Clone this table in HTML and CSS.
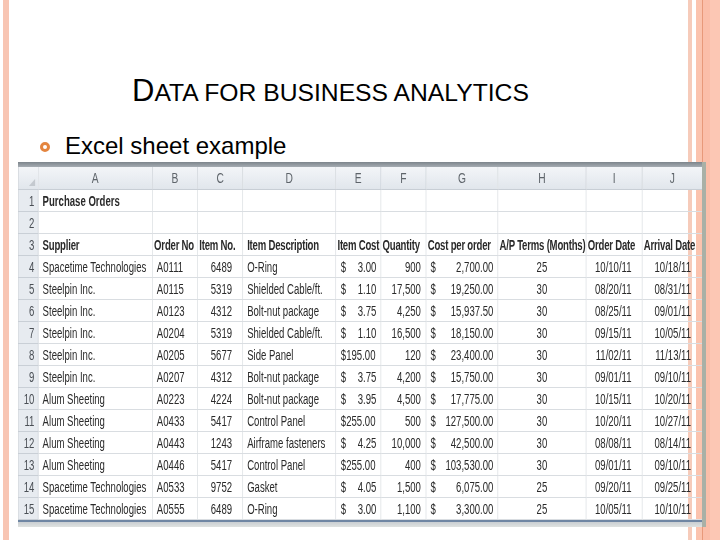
FILE: index.html
```html
<!DOCTYPE html>
<html>
<head>
<meta charset="utf-8">
<link rel="stylesheet" href="styles.css">
</head>
<body>
<div class="slide">
  <h1 class="title"><span class="big">D</span>ATA FOR BUSINESS ANALYTICS</h1>
  <div class="bullet"><span class="dot"></span><span>Excel sheet example</span></div>
  <div class="sheet">
    <div class="topbar"></div>
    <div class="gridwrap">
    <table class="grid">
      <colgroup>
        <col class="c-n"><col class="c-a"><col class="c-b"><col class="c-c"><col class="c-d"><col class="c-e"><col class="c-f"><col class="c-g"><col class="c-h"><col class="c-i"><col class="c-j">
      </colgroup>
      <tr class="colhead">
        <th class="corner"><span class="tri"></span></th><th>A</th><th>B</th><th>C</th><th>D</th><th>E</th><th>F</th><th>G</th><th>H</th><th>I</th><th>J</th>
      </tr>
      <tr><td class="n">1</td><td class="a bold">Purchase Orders</td><td></td><td></td><td></td><td></td><td></td><td></td><td></td><td></td><td></td></tr>
      <tr><td class="n">2</td><td></td><td></td><td></td><td></td><td></td><td></td><td></td><td></td><td></td><td></td></tr>
      <tr class="hdr"><td class="n">3</td><td class="a">Supplier</td><td class="h">Order No</td><td class="h">Item No.</td><td class="a">Item Description</td><td class="h">Item Cost</td><td class="h">Quantity</td><td class="h">Cost per order</td><td class="h">A/P Terms (Months)</td><td class="h">Order Date</td><td class="h">Arrival Date</td></tr>
      <tr><td class="n">4</td><td class="a">Spacetime Technologies</td><td class="b">A0111</td><td class="c">6489</td><td class="a">O-Ring</td><td class="e"><div class="acc"><span>$</span><span>3.00</span></div></td><td class="f">900</td><td class="g"><div class="acc"><span>$</span><span>2,700.00</span></div></td><td class="hc">25</td><td class="i">10/10/11</td><td class="j">10/18/11</td></tr>
      <tr><td class="n">5</td><td class="a">Steelpin Inc.</td><td class="b">A0115</td><td class="c">5319</td><td class="a">Shielded Cable/ft.</td><td class="e"><div class="acc"><span>$</span><span>1.10</span></div></td><td class="f">17,500</td><td class="g"><div class="acc"><span>$</span><span>19,250.00</span></div></td><td class="hc">30</td><td class="i">08/20/11</td><td class="j">08/31/11</td></tr>
      <tr><td class="n">6</td><td class="a">Steelpin Inc.</td><td class="b">A0123</td><td class="c">4312</td><td class="a">Bolt-nut package</td><td class="e"><div class="acc"><span>$</span><span>3.75</span></div></td><td class="f">4,250</td><td class="g"><div class="acc"><span>$</span><span>15,937.50</span></div></td><td class="hc">30</td><td class="i">08/25/11</td><td class="j">09/01/11</td></tr>
      <tr><td class="n">7</td><td class="a">Steelpin Inc.</td><td class="b">A0204</td><td class="c">5319</td><td class="a">Shielded Cable/ft.</td><td class="e"><div class="acc"><span>$</span><span>1.10</span></div></td><td class="f">16,500</td><td class="g"><div class="acc"><span>$</span><span>18,150.00</span></div></td><td class="hc">30</td><td class="i">09/15/11</td><td class="j">10/05/11</td></tr>
      <tr><td class="n">8</td><td class="a">Steelpin Inc.</td><td class="b">A0205</td><td class="c">5677</td><td class="a">Side Panel</td><td class="e"><div class="acc"><span>$195.00</span></div></td><td class="f">120</td><td class="g"><div class="acc"><span>$</span><span>23,400.00</span></div></td><td class="hc">30</td><td class="i">11/02/11</td><td class="j">11/13/11</td></tr>
      <tr><td class="n">9</td><td class="a">Steelpin Inc.</td><td class="b">A0207</td><td class="c">4312</td><td class="a">Bolt-nut package</td><td class="e"><div class="acc"><span>$</span><span>3.75</span></div></td><td class="f">4,200</td><td class="g"><div class="acc"><span>$</span><span>15,750.00</span></div></td><td class="hc">30</td><td class="i">09/01/11</td><td class="j">09/10/11</td></tr>
      <tr><td class="n">10</td><td class="a">Alum Sheeting</td><td class="b">A0223</td><td class="c">4224</td><td class="a">Bolt-nut package</td><td class="e"><div class="acc"><span>$</span><span>3.95</span></div></td><td class="f">4,500</td><td class="g"><div class="acc"><span>$</span><span>17,775.00</span></div></td><td class="hc">30</td><td class="i">10/15/11</td><td class="j">10/20/11</td></tr>
      <tr><td class="n">11</td><td class="a">Alum Sheeting</td><td class="b">A0433</td><td class="c">5417</td><td class="a">Control Panel</td><td class="e"><div class="acc"><span>$255.00</span></div></td><td class="f">500</td><td class="g"><div class="acc"><span>$</span><span>127,500.00</span></div></td><td class="hc">30</td><td class="i">10/20/11</td><td class="j">10/27/11</td></tr>
      <tr><td class="n">12</td><td class="a">Alum Sheeting</td><td class="b">A0443</td><td class="c">1243</td><td class="a">Airframe fasteners</td><td class="e"><div class="acc"><span>$</span><span>4.25</span></div></td><td class="f">10,000</td><td class="g"><div class="acc"><span>$</span><span>42,500.00</span></div></td><td class="hc">30</td><td class="i">08/08/11</td><td class="j">08/14/11</td></tr>
      <tr><td class="n">13</td><td class="a">Alum Sheeting</td><td class="b">A0446</td><td class="c">5417</td><td class="a">Control Panel</td><td class="e"><div class="acc"><span>$255.00</span></div></td><td class="f">400</td><td class="g"><div class="acc"><span>$</span><span>103,530.00</span></div></td><td class="hc">30</td><td class="i">09/01/11</td><td class="j">09/10/11</td></tr>
      <tr><td class="n">14</td><td class="a">Spacetime Technologies</td><td class="b">A0533</td><td class="c">9752</td><td class="a">Gasket</td><td class="e"><div class="acc"><span>$</span><span>4.05</span></div></td><td class="f">1,500</td><td class="g"><div class="acc"><span>$</span><span>6,075.00</span></div></td><td class="hc">25</td><td class="i">09/20/11</td><td class="j">09/25/11</td></tr>
      <tr><td class="n">15</td><td class="a">Spacetime Technologies</td><td class="b">A0555</td><td class="c">6489</td><td class="a">O-Ring</td><td class="e"><div class="acc"><span>$</span><span>3.00</span></div></td><td class="f">1,100</td><td class="g"><div class="acc"><span>$</span><span>3,300.00</span></div></td><td class="hc">25</td><td class="i">10/05/11</td><td class="j">10/10/11</td></tr>
    </table>
    </div>
    <div class="bottombar"></div>
  </div>
</div>
</body>
</html>
```
FILE: styles.css
```css
html, body {
  margin: 0;
  padding: 0;
}
body {
  width: 720px;
  height: 540px;
  overflow: hidden;
  background: #fff;
}
.slide {
  width: 720px;
  height: 540px;
  box-sizing: border-box;
  padding-top: 76px;
  font-family: "Liberation Sans", Arial, sans-serif;
  color: #000;
  background: linear-gradient(to right,
    #fff 0, #fff 3px,
    #f8c5b3 3px, #f8c5b3 9px,
    #fff 9px, #fff 688px,
    #f6cbba 688px, #f6cbba 692px,
    #fff 692px, #fff 696px,
    #fbc3ae 696px, #fbc3ae 702px,
    #e8997a 702px, #e8997a 703px,
    #fbbea9 703px, #fbbea9 710px,
    #fcc7b4 710px, #fcc7b4 720px);
}
.title {
  margin: 0;
  padding-left: 132px;
  font-weight: normal;
  font-size: 24.7px;
  line-height: 32px;
  height: 32px;
  letter-spacing: 0;
}
.title .big {
  font-size: 31px;
  line-height: 30px;
}
.bullet {
  margin-top: 24px;
  padding-left: 40px;
  height: 28px;
  display: flex;
  align-items: center;
  gap: 15px;
  font-size: 24px;
  line-height: 28px;
}
.dot {
  width: 10px;
  height: 10px;
  box-sizing: border-box;
  border-radius: 50%;
  border: 3px solid #e4853f;
  margin-top: 1px;
}
.sheet {
  margin-top: 2px;
  margin-left: 18px;
  width: 688px;
  box-sizing: border-box;
  border-right: 4px solid #a9b0a6;
  font-family: "Liberation Sans", Arial, sans-serif;
  font-size: 14px;
  color: #2a2a2a;
}
.topbar {
  height: 5px;
  background: linear-gradient(#7d858c, #a5acb2);
}
.gridwrap {
  width: 684px;
  height: 353px;
  overflow: hidden;
}
.bottombar {
  height: 7px;
  background: linear-gradient(#6f86a3 0, #6f86a3 2px, #c9ced2 2px, #dfe2e0 7px);
}
.grid {
  width: 1000px;
  table-layout: fixed;
  border-collapse: collapse;
  transform: scaleX(0.684);
  transform-origin: 0 0;
  filter: blur(0.3px);
}
.c-n { width: 29px; }
.c-a { width: 167px; }
.c-b { width: 66px; }
.c-c { width: 66px; }
.c-d { width: 136px; }
.c-e { width: 66px; }
.c-f { width: 66px; }
.c-g { width: 105px; }
.c-h { width: 129px; }
.c-i { width: 82px; }
.c-j { width: 88px; }
.grid th, .grid td {
  padding: 0;
  height: 21px;
  border: 1px solid #d9dde1;
  white-space: nowrap;
  overflow: hidden;
  line-height: 20px;
}
.colhead th {
  height: 22px;
  font-weight: normal;
  color: #5e646a;
  font-size: 15px;
  background: linear-gradient(#f3f5f8, #e1e6ec);
  border-color: #c8ced5;
  border-top: none;
}
.corner {
  position: relative;
}
.tri {
  position: absolute;
  right: 4px;
  bottom: 3px;
  width: 0;
  height: 0;
  border-left: 9px solid transparent;
  border-bottom: 7px solid #c4c9cf;
}
.grid td.n {
  background: #e7ebf0;
  color: #4a4f55;
  text-align: right;
  padding-right: 5px;
  border-color: #c9cfd6;
}
.bold, .hdr td {
  font-weight: bold;
}
.hdr td {
  letter-spacing: -0.3px;
}
.hdr td.n { font-weight: normal; letter-spacing: 0; }
.grid td.a { text-align: left; padding-left: 6px; }
.grid td.h { text-align: left; padding-left: 2px; }
.grid td.b { text-align: left; padding-left: 6px; }
.grid td.c { text-align: right; padding-right: 15px; }
.grid td.e { padding: 0 6px 0 7px; }
.grid td.f { text-align: right; padding-right: 7px; }
.grid td.g { padding: 0 6px; }
.grid td.hc { text-align: center; }
.grid td.i { text-align: right; padding-right: 15px; }
.grid td.j { text-align: right; padding-right: 16px; }
.acc {
  display: flex;
  justify-content: space-between;
}
```
